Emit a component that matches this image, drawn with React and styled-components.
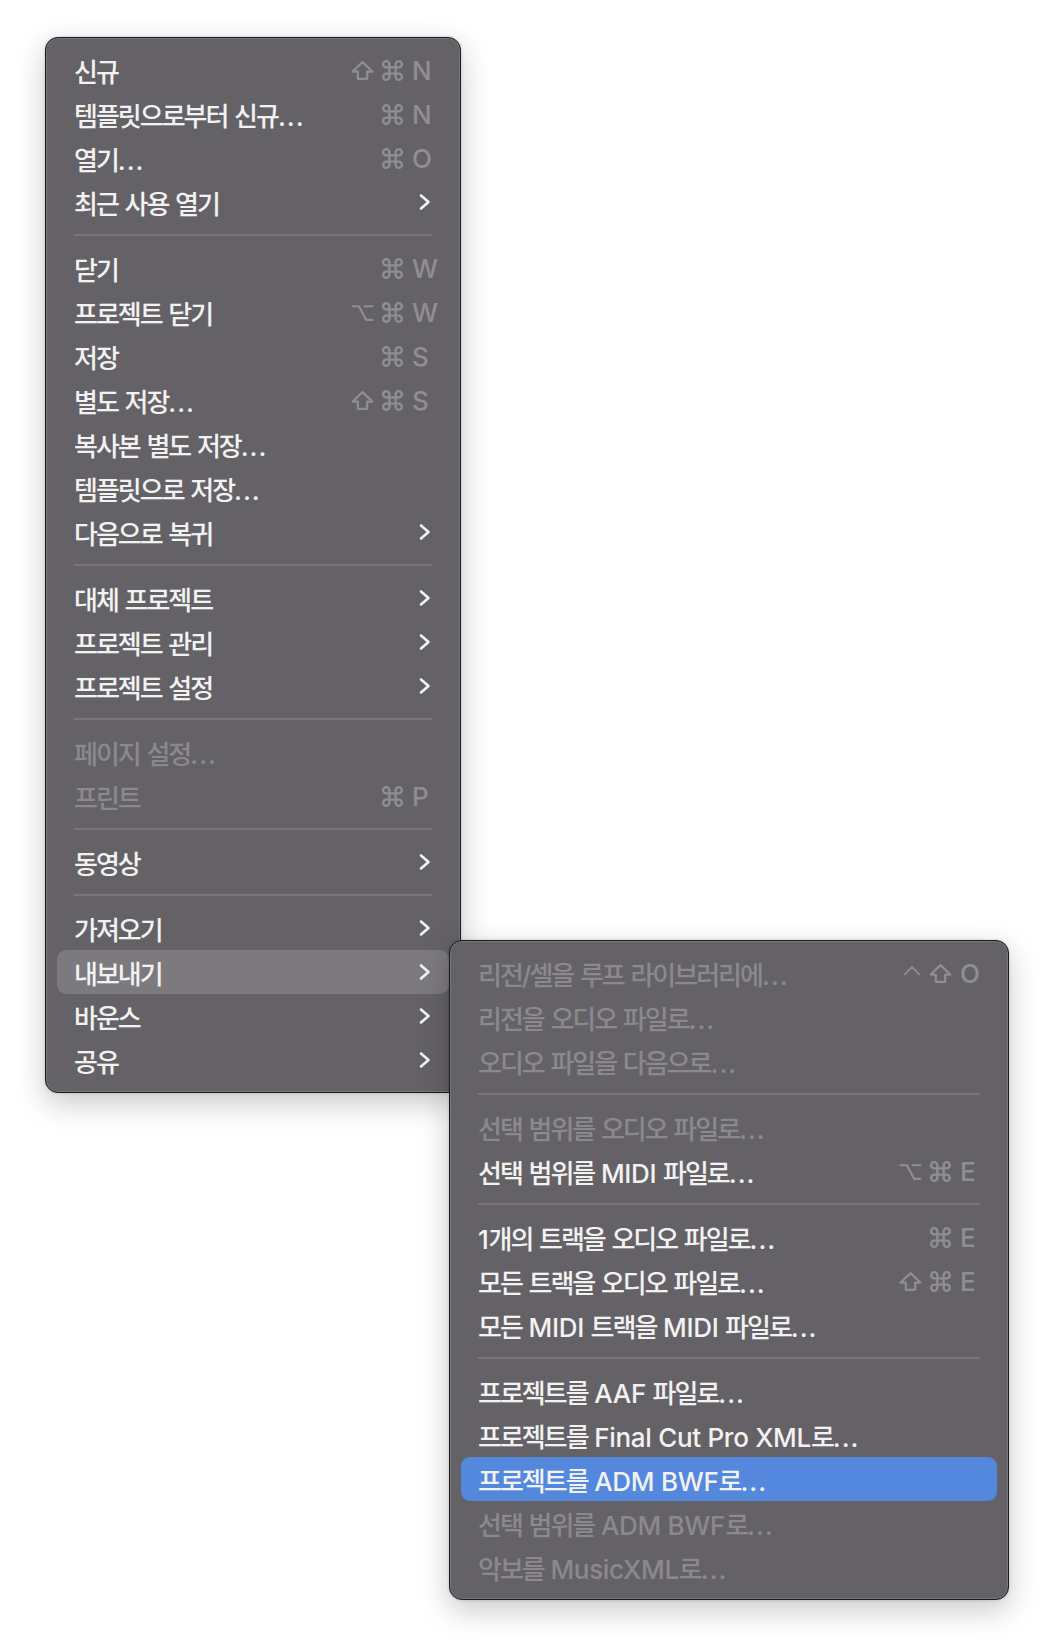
import React from 'react';
import styled, { createGlobalStyle } from 'styled-components';

const GlobalStyle = createGlobalStyle`
  html, body {
    margin: 0;
    padding: 0;
    background: #ffffff;
  }
  body {
    font-family: Inter, "Noto Sans CJK KR", sans-serif;
    -webkit-font-smoothing: antialiased;
  }
`;

const mainGroups = [
  [
    { label: '신규', mods: ['shift', 'cmd'], keyChar: 'N' },
    { label: '템플릿으로부터 신규...', mods: ['cmd'], keyChar: 'N' },
    { label: '열기...', mods: ['cmd'], keyChar: 'O' },
    { label: '최근 사용 열기', sub: true },
  ],
  [
    { label: '닫기', mods: ['cmd'], keyChar: 'W' },
    { label: '프로젝트 닫기', mods: ['opt', 'cmd'], keyChar: 'W' },
    { label: '저장', mods: ['cmd'], keyChar: 'S' },
    { label: '별도 저장...', mods: ['shift', 'cmd'], keyChar: 'S' },
    { label: '복사본 별도 저장...' },
    { label: '템플릿으로 저장...' },
    { label: '다음으로 복귀', sub: true },
  ],
  [
    { label: '대체 프로젝트', sub: true },
    { label: '프로젝트 관리', sub: true },
    { label: '프로젝트 설정', sub: true },
  ],
  [
    { label: '페이지 설정...', disabled: true },
    { label: '프린트', disabled: true, mods: ['cmd'], keyChar: 'P' },
  ],
  [
    { label: '동영상', sub: true },
  ],
  [
    { label: '가져오기', sub: true },
    { label: '내보내기', sub: true, state: 'open' },
    { label: '바운스', sub: true },
    { label: '공유', sub: true },
  ],
];

const exportGroups = [
  [
    { label: '리전/셀을 루프 라이브러리에...', disabled: true, mods: ['ctrl', 'shift'], keyChar: 'O' },
    { label: '리전을 오디오 파일로...', disabled: true },
    { label: '오디오 파일을 다음으로...', disabled: true },
  ],
  [
    { label: '선택 범위를 오디오 파일로...', disabled: true },
    { label: '선택 범위를 MIDI 파일로...', mods: ['opt', 'cmd'], keyChar: 'E' },
  ],
  [
    { label: '1개의 트랙을 오디오 파일로...', mods: ['cmd'], keyChar: 'E' },
    { label: '모든 트랙을 오디오 파일로...', mods: ['shift', 'cmd'], keyChar: 'E' },
    { label: '모든 MIDI 트랙을 MIDI 파일로...' },
  ],
  [
    { label: '프로젝트를 AAF 파일로...' },
    { label: '프로젝트를 Final Cut Pro XML로...' },
    { label: '프로젝트를 ADM BWF로...', state: 'selected' },
    { label: '선택 범위를 ADM BWF로...', disabled: true },
    { label: '악보를 MusicXML로...', disabled: true },
  ],
];

// key glyphs drawn as small svgs so they line up like the system ones
const ModIcon = ({ type }) => {
  const common = {
    fill: 'none',
    stroke: 'currentColor',
    strokeWidth: 2.1,
    strokeLinecap: 'round',
    strokeLinejoin: 'round',
  };
  if (type === 'cmd') {
    return (
      <svg width="25" height="25" viewBox="0 0 24 24">
        <path {...common} strokeWidth={2.3} d="M15 6v12a3 3 0 1 0 3-3H6a3 3 0 1 0 3 3V6a3 3 0 1 0-3 3h12a3 3 0 1 0-3-3" />
      </svg>
    );
  }
  if (type === 'shift') {
    return (
      <svg width="25" height="25" viewBox="0 0 24 24">
        <path {...common} d="M12 4 L21.5 13 H16.5 V20 H7.5 V13 H2.5 Z" />
      </svg>
    );
  }
  if (type === 'opt') {
    return (
      <svg width="25" height="25" viewBox="0 0 24 24">
        <path {...common} d="M2.5 6 H8.5 L15.5 19 H21.5 M14 6 H21.5" />
      </svg>
    );
  }
  return (
    <svg width="22" height="25" viewBox="0 0 24 24">
      <path {...common} d="M4 13 L12 5 L20 13" />
    </svg>
  );
};

const Chevron = () => (
  <svg width="13" height="18" viewBox="0 0 13 18">
    <path
      d="M3 2.5 L10.5 9 L3 15.5"
      fill="none"
      stroke="currentColor"
      strokeWidth="2.6"
      strokeLinecap="round"
      strokeLinejoin="round"
    />
  </svg>
);

const renderLabel = (text) =>
  text.split(/([가-힣/]+|\.\.\.)/).map((part, i) => {
    if (part === '...') return <Dots key={i}>{part}</Dots>;
    if (/[가-힣]/.test(part)) return <Hangul key={i}>{part}</Hangul>;
    return part;
  });

const MenuItem = ({ item }) => (
  <Row $state={item.state} $disabled={item.disabled}>
    <Label>{renderLabel(item.label)}</Label>
    {item.keyChar && (
      <Shortcut>
        {item.mods.map((m) => (
          <Mod key={m}>
            <ModIcon type={m} />
          </Mod>
        ))}
        <KeyChar>{item.keyChar}</KeyChar>
      </Shortcut>
    )}
    {item.sub && (
      <Arrow>
        <Chevron />
      </Arrow>
    )}
  </Row>
);

const MenuList = ({ groups }) =>
  groups.map((group, gi) => (
    <React.Fragment key={gi}>
      {gi > 0 && <Separator />}
      {group.map((item) => (
        <MenuItem key={item.label} item={item} />
      ))}
    </React.Fragment>
  ));

const App = () => (
  <>
    <GlobalStyle />
    <Page>
      <Menu $width={416}>
        <MenuList groups={mainGroups} />
      </Menu>
      <Submenu $width={560}>
        <MenuList groups={exportGroups} />
      </Submenu>
    </Page>
  </>
);

const Page = styled.div`
  position: relative;
  min-height: 1652px;
  padding: 37px 0 0 45px;
  box-sizing: border-box;
  background: #ffffff;
`;

const Menu = styled.div`
  width: ${(p) => p.$width}px;
  box-sizing: border-box;
  padding: 10px 11px;
  background: #646266;
  border: 1px solid #1c1c1d;
  border-radius: 13px;
  box-shadow:
    inset 0 0 0 1px rgba(255, 255, 255, 0.13),
    0 10px 30px rgba(0, 0, 0, 0.22),
    0 0 3px rgba(0, 0, 0, 0.18);
  display: flex;
  flex-direction: column;
`;

const Submenu = styled(Menu)`
  position: absolute;
  left: 449px;
  top: 940px;
`;

const Row = styled.div`
  height: 44px;
  display: flex;
  align-items: center;
  padding: 0 13px 0 17px;
  border-radius: 9px;
  font-size: 26px;
  font-weight: 500;
  letter-spacing: -0.3px;
  color: ${(p) => (p.$disabled ? '#8b898d' : '#f2f2f2')};
  background: ${(p) =>
    p.$state === 'open' ? '#7c7a7e' : p.$state === 'selected' ? '#5388dc' : 'transparent'};
`;

const Label = styled.span`
  flex: 1;
  white-space: nowrap;
`;

const Hangul = styled.span`
  letter-spacing: -2px;
`;

const Dots = styled.span`
  letter-spacing: 1px;
`;

const Shortcut = styled.div`
  display: flex;
  align-items: center;
  color: #908e92;
`;

const Mod = styled.span`
  display: flex;
  align-items: center;
  margin-right: 5px;
`;

const KeyChar = styled.span`
  width: 24px;
  margin-left: 2px;
  font-size: 26px;
  font-weight: 500;
  letter-spacing: 0;
`;

const Arrow = styled.span`
  width: 24px;
  display: flex;
  justify-content: center;
  color: #f2f2f2;
`;

const Separator = styled.div`
  height: 22px;
  margin: 0 17px;
  display: flex;
  align-items: center;
  &::after {
    content: '';
    flex: 1;
    height: 2px;
    background: #78767a;
  }
`;

export default App;
